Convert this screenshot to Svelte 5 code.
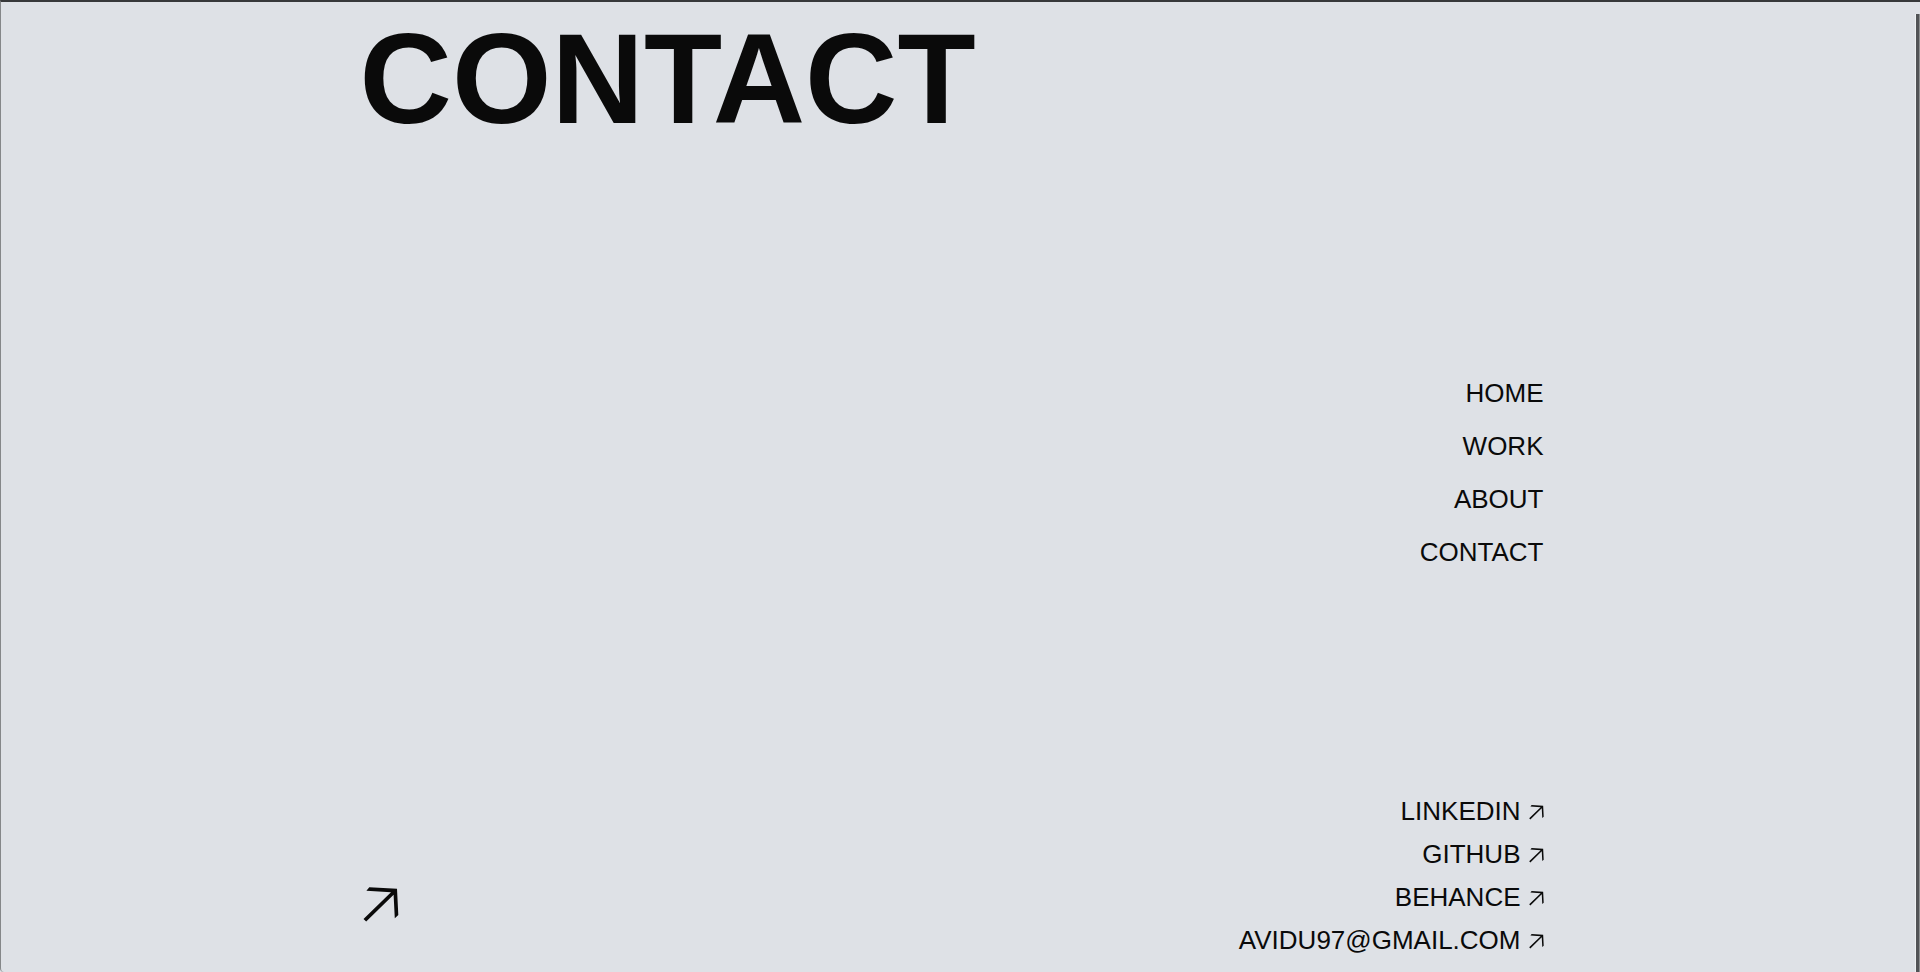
<script>
  const pages = ['HOME', 'WORK', 'ABOUT', 'CONTACT'];
  const contacts = [
    { label: 'LINKEDIN', href: '#linkedin' },
    { label: 'GITHUB', href: '#github' },
    { label: 'BEHANCE', href: '#behance' },
    { label: 'AVIDU97@GMAIL.COM', href: 'mailto:AVIDU97@GMAIL.COM' }
  ];
</script>

<div class="window">
  <main>
    <h1>CONTACT</h1>
    <nav aria-label="Pages">
      {#each pages as page}
        <a href={'#' + page.toLowerCase()}>{page}</a>
      {/each}
    </nav>
    <footer>
      <svg class="mark" viewBox="0 0 36 36" aria-hidden="true">
        <path d="M6.3 .2L34 1.7L35.3 28L31.8 31.3L30.6 7.8L3.2 34.6L.5 32L28 5.3L3.4 3.8Z" />
      </svg>
      <div class="contacts">
        {#each contacts as item}
          <a href={item.href}>
            {item.label}
            <svg class="arrow" viewBox="0 0 36 36" aria-hidden="true">
              <path d="M6.3 .2L34 1.7L35.3 28L31.8 31.3L30.6 7.8L3.2 34.6L.5 32L28 5.3L3.4 3.8Z" />
            </svg>
          </a>
        {/each}
      </div>
    </footer>
  </main>
  <span class="scroll"></span>
</div>

<style>
  :global(body) {
    background: #dee1e6;
  }

  .window {
    position: relative;
    box-sizing: border-box;
    min-height: 100vh;
    padding: 0 18px 0 0;
    border-top: 2px solid #37383a;
    border-left: 1px solid #858789;
    border-bottom-left-radius: 4px;
    background: #dee1e6;
    color: #0a0a0a;
    font-family: Arial, "Liberation Sans", sans-serif;
    font-size: 26px;
    line-height: 30px;
  }

  main {
    display: flex;
    flex-direction: column;
    box-sizing: border-box;
    max-width: 1184px;
    margin: 0 auto;
    padding-top: 3px;
  }

  h1 {
    margin: 0;
    font-size: 128px;
    line-height: 148px;
    font-weight: 700;
  }

  a {
    color: inherit;
    text-decoration: none;
  }

  nav {
    display: flex;
    flex-direction: column;
    align-items: flex-end;
    gap: 23px;
    margin-top: 225px;
  }

  footer {
    display: flex;
    align-items: flex-end;
    justify-content: space-between;
    margin-top: 229px;
    padding-bottom: 15px;
  }

  .mark {
    width: 36px;
    height: 36px;
    margin: 0 0 32px 3px;
    fill: #0a0a0a;
  }

  .contacts {
    display: flex;
    flex-direction: column;
    align-items: flex-end;
    gap: 13px;
  }

  .contacts a {
    display: flex;
    align-items: center;
    gap: 8px;
  }

  .arrow {
    width: 15px;
    height: 15px;
    margin-top: 2px;
    fill: #0a0a0a;
  }

  .scroll {
    position: absolute;
    top: 12px;
    right: 0;
    bottom: 0;
    width: 3px;
    border-left: 1px solid #eef0f2;
    border-right: 1px solid #8c8e90;
    background: #515356;
  }
</style>
